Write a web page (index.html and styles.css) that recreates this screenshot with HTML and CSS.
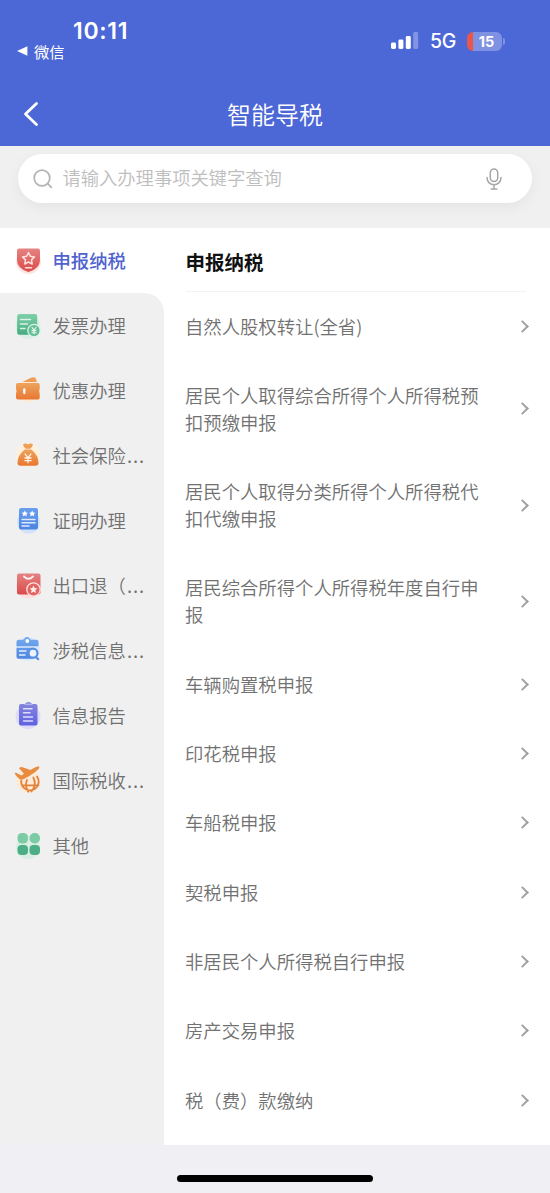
FILE: index.html
```html
<!DOCTYPE html>
<html lang="zh-CN">
<head>
<meta charset="utf-8">
<title>智能导税</title>
<link rel="stylesheet" href="styles.css">
</head>
<body>
<header class="top">
  <div class="status">
    <div class="status-left">
      <div class="time">10:11</div>
      <div class="back-app"><svg width="11" height="10" viewBox="0 0 11 10"><path d="M0 5 10.400 .3V9.700Z" fill="#fff"/></svg><span>微信</span></div>
    </div>
    <div class="status-right">
      <svg width="28" height="18" viewBox="0 0 28 18" fill="#fff"><rect y="10.500" width="5" height="6.500" rx="1.400"/><rect x="7.400" y="7.500" width="5" height="9.500" rx="1.400"/><rect x="14.800" y="4" width="5" height="13" rx="1.400"/><rect x="22.200" y="0" width="5" height="17" rx="1.400" opacity=".3"/></svg>
      <span class="net">5G</span>
      <div class="battery"><span>15</span></div>
      <i class="battery-tip"></i>
    </div>
  </div>
  <div class="nav">
    <svg class="nav-back" width="16" height="26" viewBox="0 0 16 26" fill="none" stroke="#fff" stroke-width="2.800" stroke-linecap="round" stroke-linejoin="round"><path d="M13.500 2.500 2.500 13 13.500 23.500"/></svg>
    <h1>智能导税</h1>
  </div>
</header>
<section class="search-wrap">
  <div class="search">
    <svg width="20" height="20" viewBox="0 0 20 20" fill="none" stroke="#b5b5b5" stroke-width="1.800" stroke-linecap="round"><circle cx="9" cy="9" r="7.800"/><path d="m14.700 14.700 3.600 3.600"/></svg>
    <span class="placeholder">请输入办理事项关键字查询</span>
    <svg class="mic" width="16" height="22" viewBox="0 0 16 22" fill="none" stroke="#a6a6a6" stroke-width="1.500" stroke-linecap="round"><rect x="4.300" y="1" width="7.400" height="12.500" rx="3.700"/><path d="M1 9.500C1 19 15 19 15 9.500M8 16.800V21M5.200 21h5.600"/></svg>
  </div>
</section>
<main class="main">
  <aside class="side">
    <div class="cat active"><svg class="ico" viewBox="0 0 30 30"><defs><linearGradient id="red" x2="0" y2="1"><stop stop-color="#e58383"/><stop offset="1" stop-color="#d94b49"/></linearGradient><linearGradient id="green" x2="0" y2="1"><stop stop-color="#7fd0a8"/><stop offset="1" stop-color="#45aa80"/></linearGradient><linearGradient id="orange" x2="0" y2="1"><stop stop-color="#eda45c"/><stop offset="1" stop-color="#e87732"/></linearGradient><linearGradient id="blue" x2="0" y2="1"><stop stop-color="#6a9fee"/><stop offset="1" stop-color="#4c84e0"/></linearGradient><linearGradient id="sky" x2="0" y2="1"><stop stop-color="#74abf0"/><stop offset="1" stop-color="#4e87e0"/></linearGradient><linearGradient id="violet" x2="0" y2="1"><stop stop-color="#8788de"/><stop offset="1" stop-color="#6060e0"/></linearGradient></defs>
      <circle cx="15.500" cy="16.500" r="12.500" fill="#fbe3e0"/><path d="M6 3.500h19Q27 3.500 27 5.500V15q0 8.500-11.500 12Q4 23.500 4 15V5.500q0-2 2-2Z" fill="url(#red)"/><path d="m15.500 7.500 1.900 3.800 4.100.6-3 3 .7 4.100-3.700-2-3.700 2 .7-4.100-3-3 4.100-.6ZM12.500 22.700h6" fill="none" stroke="#ffe0dc" stroke-width="1.500" stroke-linejoin="round" stroke-linecap="round"/></svg><span>申报纳税</span></div>
    <div class="cat"><svg class="ico" viewBox="0 0 30 30"><circle cx="15" cy="16.500" r="12.500" fill="#dcefe6"/><path d="M6.500 4h15.700q2 0 2 2v18.800H6.200q-2 0-2-2V20q-.7-.7 0-1.500V16q-.7-.7 0-1.500V12q-.7-.7 0-1.500V6q.3-2 2.300-2Z" fill="url(#green)"/><path d="M7.500 9.500h10M7.500 14h7M7.500 18.500h4.500" stroke="#d8f2e6" stroke-width="1.500" stroke-linecap="round"/><circle cx="21" cy="20.500" r="6.200" fill="#61bd94" stroke="#dcf3e8" stroke-width="1.300"/><path d="m18.700 17.200 2.300 3 2.300-3M21 20.200v4M18.500 20.600h5M18.500 22.700h5" stroke="#e7f7ef" stroke-width="1.100" fill="none"/></svg><span>发票办理</span></div>
    <div class="cat"><svg class="ico" viewBox="0 0 30 30"><circle cx="15" cy="16" r="11.500" fill="#fdebd9"/><path d="M9.500 7 18 2.800q3-1.300 4.500 0L24 7Z" fill="#ef9d55"/><path d="M4.500 8h20.700q1.500 0 1.500 2v4q-1.400 2.300 0 4.600v4q0 2-1.700 2H5q-2 0-2-2v-4q1.400-2.300 0-4.600v-4Q3 8 4.500 8Z" fill="url(#orange)"/><rect x="10.200" y="13.200" width="2.200" height="6" rx="1.100" fill="#fff"/></svg><span>优惠办理</span></div>
    <div class="cat"><svg class="ico" viewBox="0 0 30 30"><circle cx="15" cy="15" r="12" fill="#fff0dc"/><path d="M10 4.500q2.500-1.800 5 0 2.500-1.800 5 0-.5 2.500-2.800 4.300h-4.400Q10.500 7 10 4.500Z" fill="#eda056"/><path d="M11.800 9.500h6.400Q25.500 15 25.500 23q0 2.800-3 2.800h-15q-3 0-3-2.800 0-8 7.300-13.500Z" fill="url(#orange)"/><path d="m11.700 13.700 3.300 4 3.300-4M15 17.700v5.500M11.500 18h7M11.500 20.700h7" stroke="#fff3e7" stroke-width="1.300" fill="none"/></svg><span>社会保险<b class="dots">...</b></span></div>
    <div class="cat"><svg class="ico" viewBox="0 0 30 30"><circle cx="15.500" cy="17" r="11.500" fill="#d3e2fa"/><rect x="6" y="3" width="19" height="21.500" rx="2" fill="url(#blue)"/><path d="m11.800 5.500 1 2 2.100.2-1.500 1.500.4 2.200-2-1.100-2 1.100.4-2.200-1.500-1.500 2.100-.2ZM19.200 5.500l1 2 2.100.2-1.500 1.500.4 2.200-2-1.100-2 1.100.4-2.200-1.500-1.500 2.100-.2Z" fill="#fff"/><path d="M9 14.500h13M9 17.800h13M9 21h7" stroke="#dce9ff" stroke-width="1.500" stroke-linecap="round"/></svg><span>证明办理</span></div>
    <div class="cat"><svg class="ico" viewBox="0 0 30 30"><circle cx="15" cy="16.500" r="12" fill="#fae0df"/><rect x="4" y="3.500" width="23.500" height="21" rx="2" fill="url(#red)"/><path d="M11 6.500q4.500 4.500 9 0" stroke="#fff0ee" stroke-width="1.800" fill="none" stroke-linecap="round"/><circle cx="20.500" cy="19.500" r="6.700" fill="#e26561" stroke="#ffe2df" stroke-width="1.300"/><path d="m20.500 15.500 1.200 2.500 2.700.4-2 1.900.5 2.700-2.400-1.300-2.400 1.300.5-2.700-2-1.900 2.700-.4Z" fill="#ffebe8"/></svg><span>出口退（<b class="dots">...</b></span></div>
    <div class="cat"><svg class="ico" viewBox="0 0 30 30"><circle cx="15" cy="14" r="12" fill="#dce9fc"/><path d="M5.500 4.800H10l3-2.800h2l3 2.800h5.500q2 0 2 2V11.300H3.500V6.800q0-2 2-2ZM3.500 12.800h15.300q-4 2.500-3 6.300.8 3.400 4.200 4.700H5.500q-2 0-2-2Z" fill="url(#sky)"/><circle cx="14.300" cy="6" r="1.900" fill="#fff"/><path d="M6 16h7.500M6 20h6.500" stroke="#e3eeff" stroke-width="1.400"/><circle cx="20" cy="18.200" r="4.500" fill="#edf3fd" stroke="#568ee2" stroke-width="2.200"/><path d="m23 22 2.200 2.200" stroke="#568ee2" stroke-width="2.200" stroke-linecap="round"/></svg><span>涉税信息<b class="dots">...</b></span></div>
    <div class="cat"><svg class="ico" viewBox="0 0 30 30"><circle cx="15" cy="16.500" r="12.500" fill="#dcdcf8"/><path d="M8 4h4q1-2 3.500-2T19 4h3.500q2 0 2 2v17.500q0 2-2 2H8q-2 0-2-2V6q0-2 2-2Z" fill="url(#violet)"/><path d="M11.500 4.300h8" stroke="#b8b8ef" stroke-width="1.200"/><path d="M10.500 8.700h8.500M10.500 12.800h6.500M10.500 17h9M10.500 21h9" stroke="#dedeff" stroke-width="1.400" stroke-linecap="round"/></svg><span>信息报告</span></div>
    <div class="cat"><svg class="ico" viewBox="0 0 30 30"><circle cx="15" cy="16" r="12" fill="#fdebd9"/><path d="M8.300 15.500a8.700 8.700 0 1 0 15.700-4M9 20.300h16.500M14 15q-2.500 6 1.200 11.700M20.300 12.500q3.800 7-1.800 14" fill="none" stroke="#e58239" stroke-width="1.800" stroke-linecap="round"/><path d="M1.500 8.500q1.500-1.500 3 0l4 2 2.500-1.700L6 3.300q1.500-1.700 3.500-1l8 2.700Q22 1.800 25.500 1.300q1.700.5.500 2.200Q22 8 12.300 13.300q-3.200 2-5.500 1-3-2.300-5.300-5.800Z" fill="#e98c40"/></svg><span>国际税收<b class="dots">...</b></span></div>
    <div class="cat"><svg class="ico" viewBox="0 0 30 30"><circle cx="15" cy="17" r="12" fill="#d9efe4"/><rect x="4.500" y="3" width="10.500" height="10.500" rx="4.500" fill="#7ccba5"/><rect x="16.500" y="3" width="10.500" height="10.500" rx="5" fill="#7ccba5"/><rect x="4.500" y="15" width="10.500" height="10" rx="4" fill="#4cae86"/><rect x="16.500" y="15" width="10.500" height="10" rx="4" fill="#4cae86"/></svg><span>其他</span></div>
  </aside>
  <section class="content">
    <h2>申报纳税</h2>
    <ul class="list">
      <li><span>自然人股权转让(全省)</span><i class="arrow"></i></li>
      <li><span>居民个人取得综合所得个人所得税预扣预缴申报</span><i class="arrow"></i></li>
      <li><span>居民个人取得分类所得个人所得税代扣代缴申报</span><i class="arrow"></i></li>
      <li><span>居民综合所得个人所得税年度自行申报</span><i class="arrow"></i></li>
      <li><span>车辆购置税申报</span><i class="arrow"></i></li>
      <li><span>印花税申报</span><i class="arrow"></i></li>
      <li><span>车船税申报</span><i class="arrow"></i></li>
      <li><span>契税申报</span><i class="arrow"></i></li>
      <li><span>非居民个人所得税自行申报</span><i class="arrow"></i></li>
      <li><span>房产交易申报</span><i class="arrow"></i></li>
      <li><span>税（费）款缴纳</span><i class="arrow"></i></li>
    </ul>
  </section>
</main>
<footer class="home"><div class="home-bar"></div></footer>
</body>
</html>
```
FILE: styles.css
```css
* { box-sizing: border-box; }
body {
  margin: 0;
  height: 1193px;
  display: flex;
  flex-direction: column;
  overflow: hidden;
  background: #efeff4;
  color: #717171;
  font-family: "Noto Sans CJK SC", sans-serif;
  font-weight: 350;
  font-size: 18.35px;
}
svg { display: block; flex: none; }
.top { height: 146px; flex: none; background: #4c67d6; color: #fff; }
.status { height: 82px; display: flex; justify-content: space-between; padding: 18px 45px 0 17px; }
.time { font: 600 23px/27px Inter, sans-serif; padding-left: 56px; letter-spacing: .7px; }
.back-app { display: flex; align-items: center; gap: 6px; font-size: 15.300px; font-weight: 400; line-height: 16px; margin-top: -2px; }
.status-right { display: flex; align-items: center; height: 18px; margin-top: 14px; }
.net { font: 500 19.500px/20px Inter, sans-serif; letter-spacing: -.3px; margin: 0 11px 0 10.500px; }
.battery {
  width: 35px; height: 19px; border-radius: 6px;
  background: linear-gradient(90deg, #e9574c 6px, #7f91e3 6px);
  font: 700 14.500px/19px Inter, sans-serif;
  text-align: center; padding-left: 4px;
}
.battery-tip { width: 2px; height: 7px; margin-left: 1px; background: #7f91e3; border-radius: 0 2px 2px 0; }
.nav { height: 64px; display: grid; grid-template-columns: 50px 1fr 50px; align-items: center; }
.nav-back { margin-left: 23px; }
h1 { margin: 0; font-size: 24px; font-weight: 350; line-height: 34px; padding-bottom: 1px; text-align: center; }
.search-wrap { height: 81.500px; flex: none; padding: 8px 18px 0; background: #f0f0f0; }
.search {
  height: 49px; padding: 0 30px 0 15px; border-radius: 25px; background: #fff;
  display: flex; align-items: center; box-shadow: 0 4px 14px rgba(0,0,0,.05);
}
.placeholder { color: #bebebe; font-size: 18.300px; margin-left: 9.500px; padding-bottom: 3px; }
.mic { margin-left: auto; }
.main { height: 917.500px; flex: none; display: flex; background: #fff; }
.side {
  width: 164px; display: flex; flex-direction: column;
  background: linear-gradient(#fff 90px, #f0f0f0 90px);
}
.cat { height: 65px; flex: none; display: flex; align-items: center; gap: 9.500px; padding-left: 13px; background: #f0f0f0; white-space: nowrap; }
.cat span { padding-bottom: .5px; }
.cat.active { background: #fff; color: #4f63cf; font-weight: 500; }
.active + .cat { border-top-right-radius: 20px; }
.dots { font-weight: 400; letter-spacing: 1px; margin-left: 1px; }
.ico { width: 30px; height: 30px; }
.content { flex: 1; padding: 0 24px 0 21.500px; }
h2 { margin: 0; height: 64.500px; border-bottom: 1px solid #f3f3f3; color: #111; font-size: 19.500px; font-weight: 700; line-height: 67px; }
.list { margin: 0 -5px 0 0; padding: 0; list-style: none; }
.list li { display: flex; align-items: center; justify-content: space-between; padding: 20.800px 0 21.700px; line-height: 26.850px; }
.list span { width: 296px; margin-left: -.5px; }
.arrow { width: 9px; height: 9px; margin-right: 4px; border: solid #a2a2a2; border-width: 2px 2px 0 0; transform: rotate(45deg); }
.home { flex: 1; padding-top: 30px; }
.home-bar { width: 196px; height: 7px; margin: 0 auto; border-radius: 4px; background: #000; }
```
